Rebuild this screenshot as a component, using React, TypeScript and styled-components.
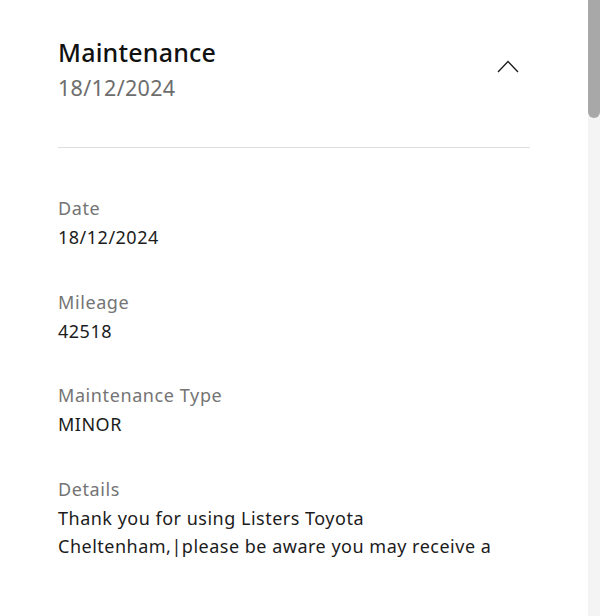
import React from "react";
import styled, { createGlobalStyle } from "styled-components";

const GlobalStyle = createGlobalStyle`
  html, body {
    margin: 0;
    padding: 0;
    background: #ffffff;
  }
  body {
    font-family: "Noto Sans", "Open Sans", sans-serif;
    color: #1c1c1c;
    overflow: hidden;
  }
`;

interface Field {
  label: string;
  value: string;
}

const fields: Field[] = [
  { label: "Date", value: "18/12/2024" },
  { label: "Mileage", value: "42518" },
  { label: "Maintenance Type", value: "MINOR" },
  {
    label: "Details",
    value:
      "Thank you for using Listers Toyota Cheltenham,|please be aware you may receive a",
  },
];

const ChevronUp = () => (
  <svg width="22" height="13" viewBox="0 0 22 13" fill="none">
    <path d="M1 12L11 1.5L21 12" stroke="#1c1c1c" strokeWidth="1.3" />
  </svg>
);

const App = () => {
  return (
    <>
      <GlobalStyle />
      <StPage>
        <StContainer>
          <StHeader>
            <StHeading>
              <h2>Maintenance</h2>
              <span>18/12/2024</span>
            </StHeading>
            <StToggle aria-label="Collapse">
              <ChevronUp />
            </StToggle>
          </StHeader>
          <StDivider />
          <StFields>
            {fields.map((field) => (
              <StField key={field.label}>
                <dt>{field.label}</dt>
                <dd>{field.value}</dd>
              </StField>
            ))}
          </StFields>
        </StContainer>
        <StScrollTrack>
          <StScrollThumb />
        </StScrollTrack>
      </StPage>
    </>
  );
};

export default App;

const StPage = styled.div`
  display: flex;
  height: 616px;
  overflow: hidden;
`;

const StContainer = styled.div`
  flex: 1;
  min-width: 0;
  padding: 32px 58px 0 58px;
`;

const StHeader = styled.div`
  display: flex;
  align-items: flex-start;
  justify-content: space-between;
  padding-bottom: 43px;
`;

const StHeading = styled.div`
  display: flex;
  flex-direction: column;

  h2 {
    margin: 0;
    font-size: 25px;
    font-weight: 500;
    line-height: 40px;
    letter-spacing: 0.2px;
    color: #111111;
  }

  span {
    font-size: 21.5px;
    line-height: 32px;
    letter-spacing: 0.3px;
    color: #6d6d6d;
  }
`;

const StToggle = styled.button`
  display: flex;
  align-items: center;
  justify-content: center;
  margin: 28px 11px 0 0;
  padding: 0;
  border: none;
  background: none;
  cursor: pointer;
`;

const StDivider = styled.hr`
  margin: 0;
  border: none;
  border-top: 1px solid #dedede;
`;

const StFields = styled.dl`
  display: flex;
  flex-direction: column;
  gap: 35px;
  margin: 45px 0 0 0;
`;

const StField = styled.div`
  dt {
    font-size: 18px;
    line-height: 30px;
    letter-spacing: 0.6px;
    color: #747474;
  }

  dd {
    margin: 0;
    font-size: 18px;
    line-height: 28.5px;
    letter-spacing: 0.5px;
    color: #1c1c1c;
  }
`;

const StScrollTrack = styled.div`
  flex: 0 0 12px;
  background: #f4f4f4;
`;

const StScrollThumb = styled.div`
  height: 118px;
  background: #a8a8a8;
  border-radius: 0 0 6px 6px;
`;
